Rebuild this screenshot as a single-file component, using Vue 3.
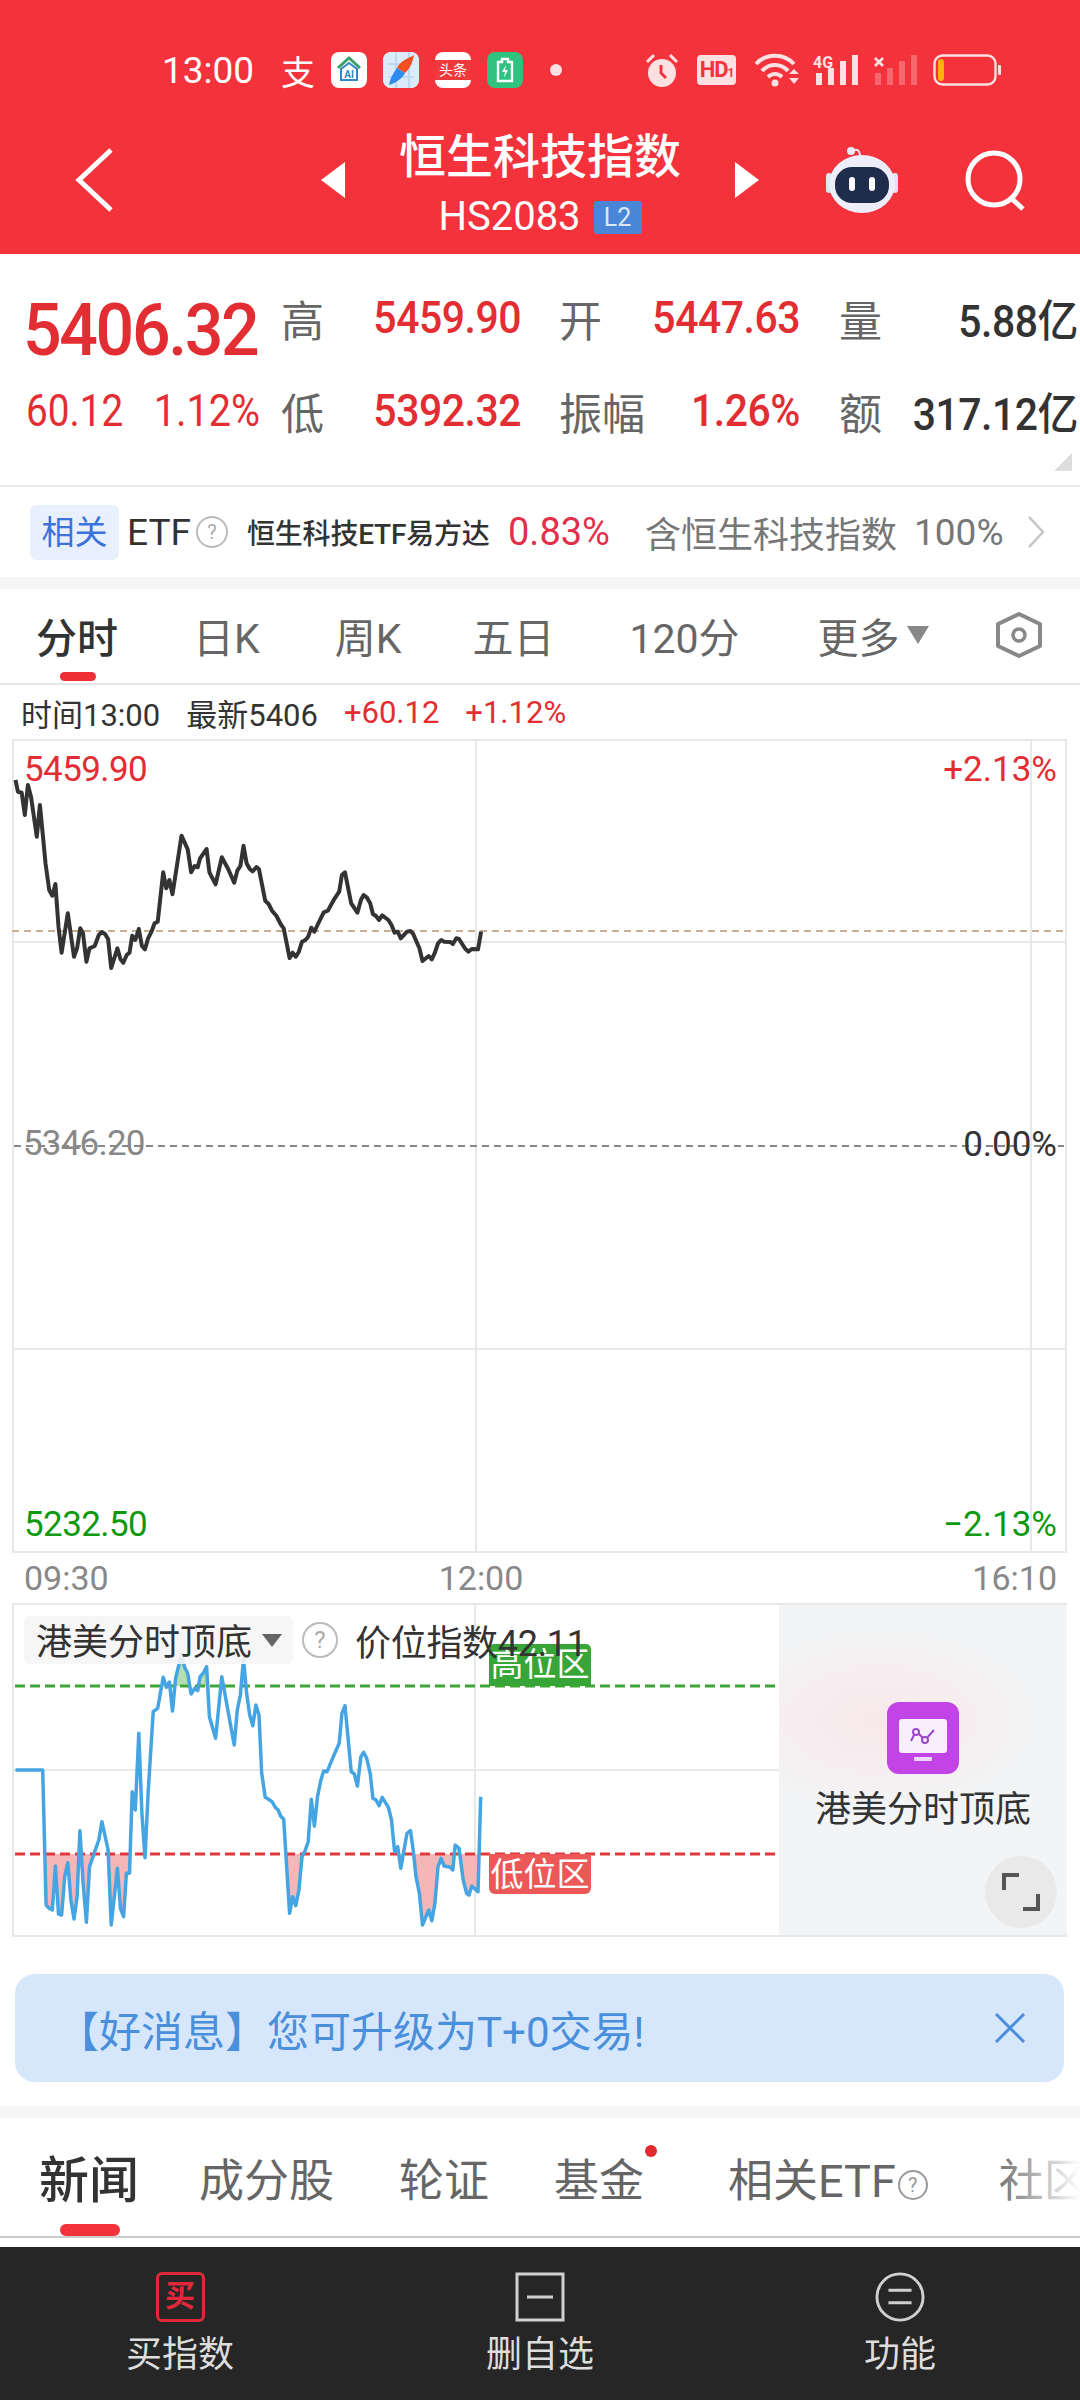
<template>
  <div class="page">
    <header class="head">
      <div class="status">
        <span class="clock">13:00</span>
        <span class="zhi">支</span>
        <div class="app app-ai">
          <svg width="36" height="36" viewBox="0 0 36 36">
            <path d="M7 16 L18 6 L29 16" fill="none" stroke="#3aa268" stroke-width="3" />
            <path d="M10 17 L18 11 L26 17 V28 H10 Z" fill="none" stroke="#2f86c8" stroke-width="2" />
            <text x="18" y="26" text-anchor="middle" class="ai-text">AI</text>
          </svg>
        </div>
        <div class="app">
          <svg width="36" height="36" viewBox="0 0 36 36">
            <rect width="36" height="36" rx="8" fill="#dcebfa" />
            <path d="M6 12 H30 M6 25 H30 M13 0 V36 M26 0 V36" stroke="#bcd8f2" stroke-width="2" />
            <path d="M31 3 C26 6 17 9 14 16 L22 21 C27 17 30 9 31 3 Z" fill="#f2511f" />
            <path d="M14 16 C10 21 7 27 6 33 C12 31 19 27 22 21 Z" fill="#2e8cf0" />
          </svg>
        </div>
        <div class="app app-news"><span>头条</span></div>
        <div class="app app-charge">
          <svg width="36" height="36" viewBox="0 0 36 36">
            <path d="M15 7 H21 V10 H25 V29 H11 V10 H15 Z" fill="none" stroke="#fff" stroke-width="2.4" />
            <path d="M19 13 L15 20 H18 L17 26 L21 18 H18 Z" fill="#fff" />
          </svg>
        </div>
        <span class="dot"></span>
        <svg class="st-alarm" width="34" height="36" viewBox="0 0 34 36">
          <circle cx="17" cy="21" r="14" fill="#fde0e2" />
          <path d="M2 10 L9 3 M32 10 L25 3" stroke="#fde0e2" stroke-width="3" />
          <path d="M16 13 V21 L21 26" fill="none" stroke="#f3323b" stroke-width="3" />
        </svg>
        <span class="st-hd">HD<small>1</small></span>
        <svg class="st-wifi" width="46" height="34" viewBox="0 0 46 34">
          <path d="M2 11 C12 0 30 0 40 11 M8 18 C15 10 27 10 34 18 M14 24 C18 20 24 20 28 24" fill="none" stroke="#fde0e2" stroke-width="4" />
          <circle cx="21" cy="30" r="3.5" fill="#fde0e2" />
          <path d="M35 21 L40 16 L45 21 Z M35 25 H45 L40 31 Z" fill="#fde0e2" />
        </svg>
        <svg class="st-sig" width="46" height="32" viewBox="0 0 46 32">
          <text x="0" y="14" class="sig-text">4G</text>
          <rect x="3" y="19" width="6" height="12" fill="#fde0e2" />
          <rect x="15" y="14" width="6" height="17" fill="#fde0e2" />
          <rect x="27" y="7" width="6" height="24" fill="#fde0e2" />
          <rect x="39" y="1" width="6" height="30" fill="#fde0e2" />
        </svg>
        <svg class="st-sig2" width="46" height="32" viewBox="0 0 46 32">
          <path d="M2 4 L10 12 M10 4 L2 12" stroke="#fde0e2" stroke-width="2.6" />
          <g fill="#fde0e2" opacity="0.3">
            <rect x="2" y="19" width="6" height="12" />
            <rect x="14" y="14" width="6" height="17" />
            <rect x="26" y="7" width="6" height="24" />
            <rect x="38" y="1" width="6" height="30" />
          </g>
        </svg>
        <svg class="st-batt" width="68" height="32" viewBox="0 0 68 32">
          <rect x="1.5" y="1.5" width="61" height="29" rx="8" fill="none" stroke="#fde0e2" stroke-width="2.4" />
          <rect x="5" y="5" width="6" height="22" rx="3" fill="#ffb400" />
          <rect x="65" y="11" width="3" height="10" rx="1" fill="#fde0e2" />
        </svg>
      </div>

      <div class="nav">
        <svg class="back" width="48" height="66" viewBox="0 0 48 66">
          <path d="M41 3 L9 33 L41 63" fill="none" stroke="#fff" stroke-width="5" />
        </svg>
        <span class="tri tri-l"></span>
        <div class="nav-title">
          <div class="name">恒生科技指数</div>
          <div class="code">HS2083<span class="l2">L2</span></div>
        </div>
        <span class="tri tri-r"></span>
        <svg class="robot" width="74" height="68" viewBox="0 0 74 68">
          <path d="M27 5 C32 2 35 4 35 11" fill="none" stroke="#eceaf8" stroke-width="2" />
          <circle cx="26" cy="5" r="4" fill="#eceaf8" />
          <rect x="1" y="27" width="6" height="20" rx="3" fill="#e3e3f2" />
          <rect x="67" y="27" width="6" height="20" rx="3" fill="#e3e3f2" />
          <ellipse cx="37" cy="38" rx="33" ry="29" fill="#eeeefa" />
          <rect x="10" y="21" width="54" height="36" rx="17" fill="#1f2d4c" />
          <rect x="24" y="31" width="6" height="14" rx="3" fill="#fff" />
          <rect x="44" y="31" width="6" height="14" rx="3" fill="#fff" />
        </svg>
        <svg class="search" width="62" height="62" viewBox="0 0 62 62">
          <circle cx="30" cy="30" r="26" fill="none" stroke="#fff" stroke-width="5" />
          <path d="M47 49 L59 60" stroke="#fff" stroke-width="5" />
        </svg>
      </div>
    </header>

    <section class="quote">
      <div class="big">5406.32</div>
      <div class="lab">高</div>
      <div class="val">5459.90</div>
      <div class="lab lab2">开</div>
      <div class="val">5447.63</div>
      <div class="lab lab3">量</div>
      <div class="val dark">5.88亿</div>

      <div class="chg"><span>60.12</span><span>1.12%</span></div>
      <div class="lab">低</div>
      <div class="val">5392.32</div>
      <div class="lab lab2">振幅</div>
      <div class="val">1.26%</div>
      <div class="lab lab3">额</div>
      <div class="val dark">317.12亿</div>
      <span class="corner"></span>
    </section>

    <section class="etf">
      <span class="etf-chip">相关</span>
      <span class="etf-word">ETF</span>
      <span class="qmark qm-etf">?</span>
      <span class="etf-name">恒生科技ETF易方达</span>
      <span class="etf-pct">0.83%</span>
      <span class="etf-hold">含恒生科技指数</span>
      <span class="etf-num">100%</span>
      <svg class="etf-arrow" width="20" height="34" viewBox="0 0 20 34">
        <path d="M3 2 L17 17 L3 32" fill="none" stroke="#c4c4c4" stroke-width="2.5" />
      </svg>
    </section>

    <div class="gap-bar"></div>

    <nav class="periods">
      <span v-for="(p, i) in periods" :key="p" class="period" :class="{ on: i === 0 }">{{ p }}</span>
      <span class="more-tri"></span>
      <svg class="hex" width="48" height="46" viewBox="0 0 48 46">
        <path d="M24 2 L45 12 V34 L24 44 L3 34 V12 Z" fill="none" stroke="#888" stroke-width="4" stroke-linejoin="round" />
        <circle cx="24" cy="23" r="6" fill="none" stroke="#888" stroke-width="3.5" />
      </svg>
    </nav>

    <div class="info">
      <span>时间13:00</span>
      <span>最新5406</span>
      <span class="red">+60.12</span>
      <span class="red">+1.12%</span>
    </div>

    <div class="chart">
      <svg class="plot" width="1055" height="814" viewBox="12 739 1055 814">
        <path d="M476 739 V1553 M1031 739 V1553 M12 942 H1067 M12 1349 H1067" stroke="#e6e8ea" stroke-width="2" />
        <path d="M12 931 H1064" stroke="#c8ae90" stroke-width="2" stroke-dasharray="7 5" />
        <path d="M14 1146 H1064" stroke="#888" stroke-width="2" stroke-dasharray="7 5" />
        <polyline :points="priceLine" fill="none" stroke="#333" stroke-width="4" stroke-linejoin="round" />
      </svg>
      <span class="tag t1 red">5459.90</span>
      <span class="tag t2 red">+2.13%</span>
      <span class="tag t3 gray">5346.20</span>
      <span class="tag t4 dark">0.00%</span>
      <span class="tag t5 green">5232.50</span>
      <span class="tag t6 green">−2.13%</span>
    </div>

    <div class="times">
      <span>09:30</span>
      <span class="noon">12:00</span>
      <span class="end">16:10</span>
    </div>

    <div class="sub">
      <div class="sub-plot">
        <svg class="plot" width="767" height="334" viewBox="12 1603 767 334">
          <defs>
            <clipPath id="lowClip"><rect x="12" y="1854" width="767" height="82" /></clipPath>
            <clipPath id="highClip"><rect x="12" y="1603" width="767" height="83" /></clipPath>
          </defs>
          <path d="M475 1603 V1936 M12 1770 H779" stroke="#e6e8ea" stroke-width="2" />
          <polygon :points="lowArea" fill="#f4b6b6" clip-path="url(#lowClip)" />
          <polygon :points="highArea" fill="#b5dfb0" clip-path="url(#highClip)" />
          <path d="M15 1686 H775" stroke="#3fa535" stroke-width="3" stroke-dasharray="10 5" />
          <path d="M15 1854 H775" stroke="#e0383c" stroke-width="3" stroke-dasharray="10 5" />
          <polyline :points="indexLine" fill="none" stroke="#45a5e2" stroke-width="3.5" stroke-linejoin="round" />
        </svg>
        <span class="zone zone-hi">高位区</span>
        <span class="zone zone-lo">低位区</span>
        <div class="sub-head">
          <div class="sub-chip">港美分时顶底<span class="chip-tri"></span></div>
          <span class="qmark qm-sub">?</span>
          <span class="sub-val">价位指数42.11</span>
        </div>
      </div>
      <div class="promo">
        <svg class="promo-icon" width="72" height="72" viewBox="0 0 72 72">
          <rect width="72" height="72" rx="12" fill="#c344e6" />
          <rect x="12" y="17" width="48" height="34" rx="3" fill="#f8eefc" />
          <rect x="27" y="55" width="18" height="4" rx="1" fill="#f0d8f8" />
          <path d="M24 39 L29 29 L38 38 L47 28" fill="none" stroke="#9a48c8" stroke-width="2" />
          <circle cx="29" cy="30" r="3" fill="#f8eefc" stroke="#9a48c8" stroke-width="2" />
          <circle cx="38" cy="38" r="3" fill="#f8eefc" stroke="#9a48c8" stroke-width="2" />
        </svg>
        <div class="promo-name">港美分时顶底</div>
        <div class="expand">
          <svg width="40" height="40" viewBox="0 0 40 40">
            <path d="M3 18 V3 H18 M37 22 V37 H22" fill="none" stroke="#555" stroke-width="4" />
          </svg>
        </div>
      </div>
    </div>

    <div class="notice">
      <span class="notice-text">【好消息】您可升级为T+0交易!</span>
      <svg class="notice-x" width="32" height="30" viewBox="0 0 32 30">
        <path d="M2 1 L30 29 M30 1 L2 29" stroke="#4a8fdc" stroke-width="3" />
      </svg>
    </div>

    <div class="gap-bar"></div>

    <nav class="news-tabs">
      <span class="news-tab on">新闻</span>
      <span class="news-tab">成分股</span>
      <span class="news-tab">轮证</span>
      <span class="news-tab has-dot">基金</span>
      <span class="news-tab etf-tab">相关ETF<span class="qmark qm-tab">?</span></span>
      <span class="news-tab">社区</span>
      <span class="fade"></span>
    </nav>

    <footer class="bottom">
      <div class="b-item">
        <span class="buy-icon">买</span>
        <span class="b-label">买指数</span>
      </div>
      <div class="b-item">
        <svg width="50" height="50" viewBox="0 0 50 50">
          <rect x="2" y="2" width="46" height="46" fill="none" stroke="#d0d0d0" stroke-width="3" />
          <path d="M12 25 H38" stroke="#d0d0d0" stroke-width="3" />
        </svg>
        <span class="b-label">删自选</span>
      </div>
      <div class="b-item">
        <svg width="52" height="52" viewBox="0 0 52 52">
          <circle cx="26" cy="26" r="24" fill="none" stroke="#d0d0d0" stroke-width="3" />
          <path d="M14 19 H38 M14 32 H38" stroke="#d0d0d0" stroke-width="3" />
        </svg>
        <span class="b-label">功能</span>
      </div>
    </footer>
  </div>
</template>

<script setup>
import { computed } from 'vue';

const periods = ['分时', '日K', '周K', '五日', '120分', '更多'];

// traced from the crops, in crop pixels (x / 2.904, y / 3)
const priceRaw = [
  45,120, 52,155, 63,158, 72,225, 81,135, 90,170, 107,290, 116,195, 125,290, 132,370, 143,450, 152,467, 161,432,
  170,560, 179,638, 197,520, 215,650, 224,625, 233,565, 241,580, 251,665, 260,625, 275,618, 287,585, 296,576,
  305,582, 314,597, 323,684, 341,625, 350,658, 358,668, 368,645, 376,638, 384,587, 393,600, 403,567, 412,618,
  421,628, 430,595, 440,575, 449,550, 458,545, 474,397, 483,445, 492,420, 501,463, 515,370, 527,287, 545,328,
  555,397, 565,378, 574,382, 581,355, 600,327, 608,397, 626,433, 644,352, 663,388, 680,428, 689,392, 698,378,
  707,317, 716,370, 725,387, 734,394, 745,381, 752,388, 770,482, 780,492, 790,512, 803,528, 815,552, 824,565,
  841,654, 850,638, 859,650, 868,635, 877,605, 887,600, 895,590, 904,563, 913,575, 922,555, 940,517, 952,512,
  968,482, 985,455, 993,405, 1002,397, 1020,490, 1038,518, 1048,480, 1056,465, 1065,472, 1075,490, 1083,522,
  1092,528, 1101,540, 1110,526, 1128,540, 1137,555, 1146,578, 1155,575, 1164,595, 1182,575, 1192,573, 1200,582,
  1218,625, 1227,663, 1245,648, 1254,658, 1263,638, 1272,610, 1281,600, 1290,605, 1308,606, 1315,612, 1325,595,
  1333,597, 1350,625, 1360,635, 1370,627, 1388,628, 1397,575
];

const indexRaw = [
  45,570, 124,570, 134,975, 143,985, 152,990, 161,858, 170,1002, 179,1005, 188,890, 197,848, 206,960, 215,1017,
  224,950, 232,752, 241,905, 251,1027, 260,860, 287,780, 296,725, 314,810, 323,1035, 341,865, 350,985, 359,1010,
  367,880, 376,880, 384,635, 393,690, 403,460, 412,700, 421,833, 430,640, 445,395, 458,385, 474,292, 483,322,
  492,306, 501,393, 510,295, 527,222, 536,262, 545,280, 555,342, 565,325, 574,332, 581,290, 590,280, 600,260,
  608,410, 626,475, 644,290, 680,495, 689,390, 698,345, 707,235, 716,340, 725,405, 734,437, 743,375, 752,405,
  760,580, 770,652, 780,658, 790,665, 800,683, 808,690, 815,708, 824,718, 841,1000, 850,950, 859,977, 868,930,
  877,830, 887,810, 895,785, 904,658, 913,738, 922,650, 932,600, 940,573, 950,575, 968,530, 985,490, 993,400,
  1002,377, 1020,575, 1029,582, 1038,618, 1048,530, 1056,517, 1065,535, 1075,580, 1083,655, 1092,660, 1101,677,
  1110,652, 1128,682, 1137,720, 1146,815, 1155,800, 1164,865, 1182,760, 1192,752, 1200,810, 1208,890, 1218,940,
  1227,1035, 1245,990, 1254,1022, 1263,970, 1272,860, 1281,835, 1290,858, 1308,862, 1315,870, 1322,795, 1333,805,
  1345,900, 1355,940, 1362,945, 1370,918, 1388,935, 1396,650
];

function toPoints(raw, top) {
  const out = [];
  for (let i = 0; i < raw.length; i += 2) {
    out.push((raw[i] / 2.904).toFixed(1) + ',' + (top + raw[i + 1] / 3).toFixed(1));
  }
  return out;
}

const priceLine = computed(() => toPoints(priceRaw, 740).join(' '));
const indexLine = computed(() => toPoints(indexRaw, 1580).join(' '));
const lowArea = computed(() => toPoints(indexRaw, 1580).join(' ') + ' 481,1854 15,1854');
const highArea = computed(() => toPoints(indexRaw, 1580).join(' ') + ' 481,1686 15,1686');
</script>

<style>
html, body {
  margin: 0;
  background: #fff;
}
</style>

<style scoped>
.page {
  width: 1080px;
  height: 2400px;
  overflow: hidden;
  display: flex;
  flex-direction: column;
  background: #fff;
  color: #333;
  font-family: Roboto, "Noto Sans CJK SC", sans-serif;
}

.red { color: #e22d32; }
.green { color: #0f990f; }
.gray { color: #888; }
.dark { color: #333; }

/* 顶部 */
.head {
  height: 254px;
  flex: none;
  background: #f3323b;
  color: #fff;
}
.status {
  display: flex;
  align-items: center;
  height: 36px;
  padding: 52px 0 36px 162px;
}
.clock { width: 93px; font-size: 37px; }
.zhi { width: 34px; margin: 0 16px 0 26px; font-size: 34px; }
.app {
  width: 36px;
  height: 36px;
  margin-right: 16px;
  border-radius: 8px;
  overflow: hidden;
  background: #fff;
}
.ai-text { font: bold 10px Roboto, sans-serif; fill: #2f86c8; }
.app-news {
  display: flex;
  align-items: center;
  justify-content: center;
}
.app-news span {
  width: 100%;
  height: 20px;
  background: #ee3a3a;
  color: #fff;
  font-size: 14px;
  line-height: 20px;
  text-align: center;
}
.app-charge { background: #2ec27e; }
.dot {
  width: 12px;
  height: 12px;
  margin: 0 83px 0 11px;
  border-radius: 50%;
  background: #fde0e2;
}
.st-hd {
  width: 39px;
  height: 30px;
  margin: 0 18px;
  border-radius: 4px;
  background: #fde0e2;
  color: #f3323b;
  font-size: 22px;
  font-weight: 700;
  line-height: 30px;
  text-align: center;
  letter-spacing: -1px;
}
.st-hd small { font-size: 12px; }
.st-wifi { margin-right: 13px; }
.st-sig { margin-right: 14px; }
.st-sig2 { margin-right: 14px; }
.sig-text { font: bold 16px Roboto, sans-serif; fill: #fde0e2; }

.nav {
  display: flex;
  align-items: center;
  height: 112px;
  padding: 0 0 18px 70px;
}
.tri {
  width: 0;
  height: 0;
  border-top: 18px solid transparent;
  border-bottom: 18px solid transparent;
}
.tri-l { margin-left: 203px; border-right: 24px solid #fff; }
.tri-r { border-left: 24px solid #fff; }
.nav-title {
  width: 390px;
  text-align: center;
}
.name {
  font-size: 47px;
  font-weight: 500;
  line-height: 60px;
}
.code {
  display: flex;
  align-items: center;
  justify-content: center;
  margin-top: 10px;
  margin-bottom: -4px;
  font-size: 40px;
  line-height: 40px;
}
.l2 {
  width: 48px;
  height: 33px;
  margin-left: 13px;
  border-radius: 3px;
  background: #4a86d8;
  color: #dce8fa;
  font-size: 25px;
  line-height: 33px;
}
.robot { margin-left: 66px; }
.search { margin-left: 65px; }

/* 报价 */
.quote {
  position: relative;
  height: 214px;
  flex: none;
  padding: 17px 0 0 26px;
  display: grid;
  grid-template-columns: 255px 95px 145px 133px 146px 112px 166px;
  grid-auto-rows: 93px;
  align-items: center;
  border-bottom: 2px solid #eaeaea;
  box-sizing: content-box;
}
.big {
  align-self: end;
  margin: 0 0 -3px -3px;
  color: #e22d32;
  font-size: 72px;
  font-weight: 500;
  line-height: 72px;
  letter-spacing: -2.5px;
  white-space: nowrap;
  transform: scaleX(0.945);
  transform-origin: left center;
}
.chg {
  display: flex;
  justify-content: space-between;
  width: 234px;
  color: #e22d32;
  font-size: 44px;
}
.chg span { display: inline-block; transform: scaleX(0.88); transform-origin: left center; }
.chg span + span { transform: scaleX(0.9); transform-origin: right center; }
.lab {
  color: #666;
  font-size: 43px;
}
.lab2 { padding-left: 38px; }
.lab3 { padding-left: 39px; }
.val {
  display: flex;
  justify-content: flex-end;
  color: #e22d32;
  font-size: 44px;
  font-weight: 500;
  letter-spacing: -0.5px;
  white-space: nowrap;
  transform: scaleX(0.93);
  transform-origin: right center;
}
.val.dark { color: #333; }
.corner {
  position: absolute;
  right: 8px;
  bottom: 14px;
  width: 0;
  height: 0;
  border-left: 18px solid transparent;
  border-bottom: 18px solid #ddd;
}

/* 相关ETF */
.etf {
  display: flex;
  align-items: center;
  height: 90px;
  flex: none;
  padding-left: 30px;
}
.etf-chip {
  width: 89px;
  height: 55px;
  margin-right: 8px;
  border-radius: 6px;
  background: #e8f0fd;
  color: #3c72dc;
  font-size: 33px;
  line-height: 55px;
  text-align: center;
}
.etf-word { width: 69px; font-size: 37px; }
.qmark {
  display: inline-block;
  box-sizing: border-box;
  border: 2px solid #bbb;
  border-radius: 50%;
  color: #aaa;
  text-align: center;
}
.qm-etf {
  width: 32px;
  height: 32px;
  margin-right: 19px;
  font-size: 20px;
  line-height: 28px;
}
.etf-name {
  width: 261px;
  color: #333;
  font-size: 28px;
  font-weight: 500;
  letter-spacing: -0.2px;
}
.etf-pct {
  width: 137px;
  color: #e2304a;
  font-size: 38px;
}
.etf-hold {
  width: 269px;
  color: #777;
  font-size: 36px;
}
.etf-num {
  width: 110px;
  color: #777;
  font-size: 37px;
}
.etf-arrow { margin-left: 2px; }

.gap-bar {
  height: 12px;
  flex: none;
  background: #f5f5f5;
}

/* 周期 */
.periods {
  position: relative;
  display: flex;
  align-items: center;
  gap: 75px;
  height: 96px;
  flex: none;
  box-sizing: border-box;
  padding: 0 0 2px 36px;
  border-bottom: 2px solid #e6e6e6;
}
.period {
  color: #666;
  font-size: 41px;
}
.period:nth-child(3) { margin-right: -4px; }
.period:nth-child(5) { margin-right: 3px; }
.period.on {
  position: relative;
  color: #333;
  font-weight: 500;
}
.period.on::after {
  content: '';
  position: absolute;
  left: 24px;
  bottom: -16px;
  width: 36px;
  height: 9px;
  border-radius: 5px;
  background: #ee2f36;
}
.more-tri {
  width: 0;
  height: 0;
  margin-left: -68px;
  border-left: 11px solid transparent;
  border-right: 11px solid transparent;
  border-top: 18px solid #888;
}
.hex {
  margin-left: -9px;
}

.info {
  display: flex;
  align-items: center;
  gap: 26px;
  height: 54px;
  flex: none;
  padding-left: 21px;
  font-size: 31px;
}

/* 主图 */
.chart {
  position: relative;
  width: 1055px;
  height: 814px;
  flex: none;
  margin-left: 12px;
  box-sizing: border-box;
  border: 2px solid #e6e8ea;
}
.plot {
  position: absolute;
  left: -2px;
  top: -2px;
}
.sub-plot .plot {
  left: -2px;
  top: 0;
}
.tag {
  position: absolute;
  font-size: 35px;
  line-height: 40px;
  letter-spacing: -0.6px;
}
.t1 { left: 10px; top: 9px; }
.t2 { right: 8px; top: 9px; letter-spacing: 0; }
.t3 { left: 9px; top: 383px; letter-spacing: -0.8px; }
.t4 { right: 8px; top: 384px; letter-spacing: 0; }
.t5 { left: 10px; top: 764px; }
.t6 { right: 8px; top: 764px; letter-spacing: 0; }

.times {
  display: flex;
  align-items: center;
  height: 50px;
  flex: none;
  padding: 0 23px 0 24px;
  color: #888;
  font-size: 34px;
}
.noon { margin-left: 330px; }
.end { margin-left: auto; }

/* 副图 */
.sub {
  display: flex;
  width: 1055px;
  height: 334px;
  flex: none;
  margin-left: 12px;
  box-sizing: border-box;
  border-top: 2px solid #e8e8e8;
  border-bottom: 2px solid #e8e8e8;
}
.sub-plot {
  position: relative;
  width: 767px;
  margin-top: -2px;
  margin-bottom: -2px;
  border-left: 2px solid #e8e8e8;
  box-sizing: border-box;
}
.sub-head {
  position: absolute;
  left: 10px;
  top: 11px;
  display: flex;
  align-items: center;
  white-space: nowrap;
}
.sub-chip {
  display: flex;
  align-items: center;
  width: 269px;
  height: 48px;
  box-sizing: border-box;
  padding: 0 0 3px 12px;
  border-radius: 6px;
  background: rgba(245, 245, 245, 0.9);
  color: #333;
  font-size: 36px;
}
.chip-tri {
  width: 0;
  height: 0;
  margin: 3px 0 0 10px;
  border-left: 10px solid transparent;
  border-right: 10px solid transparent;
  border-top: 13px solid #666;
}
.qm-sub {
  width: 36px;
  height: 36px;
  margin-left: 9px;
  font-size: 24px;
  line-height: 32px;
}
.sub-val {
  margin-left: 17px;
  color: #333;
  font-size: 36px;
  letter-spacing: -0.3px;
}
.zone {
  position: absolute;
  left: 475px;
  width: 102px;
  color: #fff;
  font-size: 33px;
  line-height: 42px;
  text-align: center;
}
.zone-hi {
  top: 41px;
  height: 42px;
  border-radius: 5px 5px 0 0;
  background: #37a537;
}
.zone-lo {
  top: 251px;
  height: 40px;
  border-radius: 0 0 6px 6px;
  background: #ec5757;
}
.promo {
  position: relative;
  display: flex;
  flex-direction: column;
  align-items: center;
  width: 288px;
  box-sizing: border-box;
  padding-top: 97px;
  background:
    radial-gradient(ellipse 160px 90px at 35% 35%, rgba(250, 226, 230, 0.7), transparent),
    linear-gradient(#f3f4f5, #f2f4f5);
}
.promo-icon { flex: none; }
.promo-name {
  margin-top: 12px;
  color: #333;
  font-size: 36px;
  line-height: 48px;
}
.expand {
  position: absolute;
  right: 10px;
  bottom: 7px;
  display: flex;
  align-items: center;
  justify-content: center;
  width: 72px;
  height: 72px;
  border-radius: 50%;
  background: #e9e9e9;
}

/* 提示条 */
.notice {
  display: flex;
  align-items: center;
  justify-content: space-between;
  width: 1049px;
  height: 108px;
  flex: none;
  box-sizing: border-box;
  margin: 37px 0 24px 15px;
  padding: 0 38px 0 42px;
  border-radius: 20px;
  background: #d7e7fb;
}
.notice-text {
  color: #4a8fdc;
  font-size: 42px;
}

/* 新闻栏 */
.news-tabs {
  position: relative;
  display: flex;
  align-items: center;
  gap: 65px;
  height: 120px;
  flex: none;
  box-sizing: border-box;
  padding-left: 39px;
  border-bottom: 2px solid #ccc;
  overflow: hidden;
  white-space: nowrap;
}
.news-tab {
  position: relative;
  color: #666;
  font-size: 45px;
  flex: none;
}
.news-tab.on {
  margin-right: -5px;
  color: #333;
  font-size: 50px;
  font-weight: 500;
  height: 118px;
  line-height: 126px;
}
.news-tab.on::after {
  content: '';
  position: absolute;
  left: 21px;
  bottom: 0;
  width: 60px;
  height: 12px;
  border-radius: 6px;
  background: #f3323b;
}
.has-dot::after {
  content: '';
  position: absolute;
  right: -13px;
  top: 0;
  width: 12px;
  height: 12px;
  border-radius: 50%;
  background: #e02a30;
}
.etf-tab { margin-left: 19px; margin-right: 6px; }
.qm-tab {
  width: 30px;
  height: 30px;
  margin-left: 2px;
  font-size: 20px;
  line-height: 26px;
  vertical-align: 5px;
  border-color: #999;
  color: #999;
}
.fade {
  position: absolute;
  right: 0;
  top: 0;
  width: 80px;
  height: 100%;
  background: linear-gradient(to right, rgba(255, 255, 255, 0.1), #fff);
}

/* 底栏 */
.bottom {
  display: flex;
  height: 153px;
  flex: none;
  margin-top: 9px;
  background: #262626;
}
.b-item {
  display: flex;
  flex-direction: column;
  align-items: center;
  flex: 1;
  padding-top: 25px;
  box-sizing: border-box;
}
.b-item svg { height: 50px; flex: none; }
.buy-icon {
  width: 49px;
  height: 50px;
  box-sizing: border-box;
  border: 3px solid #e0283a;
  border-radius: 6px;
  color: #e0283a;
  font-size: 30px;
  font-weight: 700;
  line-height: 42px;
  text-align: center;
}
.b-label {
  margin-top: 11px;
  color: #ddd;
  font-size: 36px;
  line-height: 44px;
}
</style>
